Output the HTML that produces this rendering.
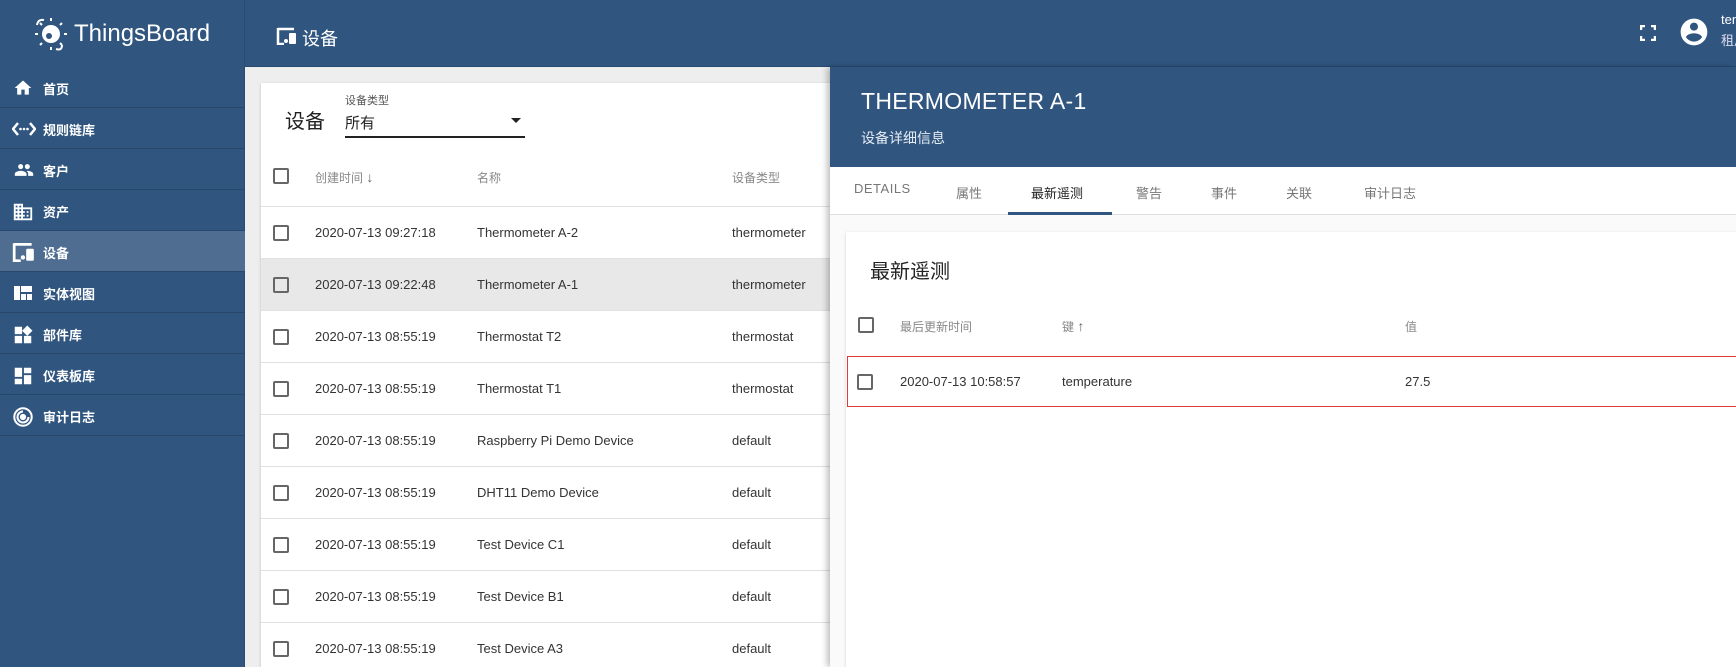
<!DOCTYPE html>
<html><head><meta charset="utf-8"><style>
*{box-sizing:border-box;margin:0;padding:0}
html{width:1736px;height:667px;overflow:hidden}
body{width:1736px;height:667px;overflow:hidden;background:#eeeeee;font-family:"Liberation Sans","Noto Sans CJK SC",sans-serif;position:relative}
.a{position:absolute;white-space:nowrap}
.top{left:0;top:0;width:1736px;height:67px;background:#305680;border-bottom:1px solid #274a70}
.side{left:0;top:0;width:245px;height:667px;background:#305680;border-right:1px solid #2a4b72}
.item{position:absolute;left:0;width:245px;height:41px;border-bottom:1px solid #28476b;color:#fff;font-size:13px;font-weight:bold}
.item span{position:absolute;left:43px;top:12px}
.item svg{position:absolute;left:12px;top:11px}
.sel{background:#4e6d91}
.cb{position:absolute;width:16px;height:16px;border:2px solid #666;border-radius:2px}
.row{position:absolute;left:261px;width:570px;height:52px;border-bottom:1px solid #e0e0e0;font-size:13px;color:#333;white-space:nowrap}
.row span{position:absolute;top:18px}
.th{font-size:12px;color:#888}
.tab{position:absolute;top:183px;font-size:13px;color:#777;white-space:nowrap}
</style></head><body>
<div class="a" style="left:0;top:0;width:1736px;height:2px;border-top:1px dashed #2b7bd8"></div>
<div class="a top"></div>
<div class="a side"></div>
<svg class="a" style="left:32px;top:15px" width="40" height="38" viewBox="0 0 40 38"><circle cx="19" cy="19" r="9" fill="#fff"/><g stroke="#fff" stroke-width="2" fill="none"><path d="M5 10 Q6 4 12 5"/><path d="M30 30 Q30 36 24 34"/><path d="M19 6v-3M19 32v3M6 19h-3M32 19h3M10 10l-2-2M28 28l2 2M28 10l2-2M10 28l-2 2"/></g><circle cx="17" cy="21" r="3" fill="#305680"/></svg>
<div class="a" style="left:74px;top:20px;color:#fff;font-size:24px">ThingsBoard</div>
<svg class="a" style="left:276px;top:27px" width="22" height="18" viewBox="0 0 22 18"><path d="M2 2h16" stroke="#fff" stroke-width="2.5"/><path d="M2 1v16h6" stroke="#fff" stroke-width="2.5" fill="none"/><rect x="13" y="6" width="7" height="11" rx="1" fill="#fff"/><circle cx="10" cy="14" r="2" fill="#fff"/></svg>
<div class="a" style="left:302px;top:25px;color:#fff;font-size:18px">设备</div>
<svg class="a" style="left:1640px;top:25px" width="16" height="16" viewBox="0 0 16 16" fill="none" stroke="#fff" stroke-width="2.5"><path d="M1 5V1h4M11 1h4v4M15 11v4h-4M5 15H1v-4"/></svg>
<svg class="a" style="left:1678px;top:16px" width="32" height="32" viewBox="0 0 24 24"><path fill="#fff" d="M12 2C6.48 2 2 6.48 2 12s4.48 10 10 10 10-4.48 10-10S17.52 2 12 2zm0 3c1.66 0 3 1.34 3 3s-1.34 3-3 3-3-1.34-3-3 1.34-3 3-3zm0 14.2c-2.5 0-4.71-1.28-6-3.22.03-1.99 4-3.08 6-3.08 1.99 0 5.97 1.09 6 3.08-1.29 1.94-3.5 3.22-6 3.22z"/></svg>
<div class="a" style="left:1721px;top:12px;color:#fff;font-size:13px">tenant</div>
<div class="a" style="left:1721px;top:30px;color:#dde;font-size:13px">租户</div>
<div class="item" style="top:67px"><svg width="22" height="20" viewBox="0 0 24 24"><path fill="#fff" d="M10 20v-6h4v6h5v-8h3L12 3 2 12h3v8z"/></svg><span>首页</span></div>
<div class="item" style="top:108px"><svg width="24" height="20" viewBox="0 0 24 20"><path d="M6 4L1 10l5 6M18 4l5 6-5 6" stroke="#fff" stroke-width="2.5" fill="none"/><circle cx="8.5" cy="10" r="1.3" fill="#fff"/><circle cx="12" cy="10" r="1.3" fill="#fff"/><circle cx="15.5" cy="10" r="1.3" fill="#fff"/></svg><span>规则链库</span></div>
<div class="item" style="top:149px"><svg width="24" height="20" viewBox="0 0 24 24"><path fill="#fff" d="M16 11c1.66 0 2.99-1.34 2.99-3S17.66 5 16 5c-1.66 0-3 1.34-3 3s1.34 3 3 3zm-8 0c1.66 0 2.99-1.34 2.99-3S9.66 5 8 5C6.34 5 5 6.34 5 8s1.34 3 3 3zm0 2c-2.33 0-7 1.17-7 3.5V19h14v-2.5c0-2.33-4.67-3.5-7-3.5zm8 0c-.29 0-.62.02-.97.05 1.16.84 1.97 1.970 1.97 3.45V19h6v-2.5c0-2.33-4.67-3.5-7-3.5z"/></svg><span>客户</span></div>
<div class="item" style="top:190px"><svg width="22" height="22" viewBox="0 0 24 24"><path fill="#fff" d="M12 7V3H2v18h20V7H12zM6 19H4v-2h2v2zm0-4H4v-2h2v2zm0-4H4V9h2v2zm0-4H4V5h2v2zm4 12H8v-2h2v2zm0-4H8v-2h2v2zm0-4H8V9h2v2zm0-4H8V5h2v2zm10 12h-8v-2h2v-2h-2v-2h2v-2h-2V9h8v10zm-2-8h-2v2h2v-2zm0 4h-2v2h2v-2z"/></svg><span>资产</span></div>
<div class="item sel" style="top:231px"><svg width="24" height="20" viewBox="0 0 22 18"><path d="M2 2h16" stroke="#fff" stroke-width="2.5"/><path d="M2 1v16h6" stroke="#fff" stroke-width="2.5" fill="none"/><rect x="13" y="6" width="7" height="11" rx="1" fill="#fff"/><circle cx="10" cy="14" r="2" fill="#fff"/></svg><span>设备</span></div>
<div class="item" style="top:272px"><svg width="22" height="20" viewBox="0 0 22 20"><rect x="2" y="3" width="6" height="14" fill="#fff"/><rect x="9" y="3" width="11" height="6" fill="#fff"/><rect x="9" y="11" width="5" height="6" fill="#fff"/><rect x="15" y="11" width="5" height="6" fill="#fff"/></svg><span>实体视图</span></div>
<div class="item" style="top:313px"><svg width="22" height="22" viewBox="0 0 24 24"><path fill="#fff" d="M13 13v8h8v-8h-8zM3 21h8v-8H3v8zM3 3v8h8V3H3zm13.66-1.31L11 7.34 16.66 13l5.66-5.66-5.66-5.65z"/></svg><span>部件库</span></div>
<div class="item" style="top:354px"><svg width="22" height="22" viewBox="0 0 24 24"><path fill="#fff" d="M3 13h8V3H3v10zm0 8h8v-6H3v6zm10 0h8V11h-8v10zm0-18v6h8V3h-8z"/></svg><span>仪表板库</span></div>
<div class="item" style="top:395px"><svg width="22" height="22" viewBox="0 0 24 24" fill="none" stroke="#fff" stroke-width="2.2"><circle cx="12" cy="12" r="9.5"/><path d="M12 6a6 6 0 1 0 6 6"/><circle cx="12" cy="12" r="2.3" fill="#fff"/></svg><span>审计日志</span></div>
<div class="a" style="left:261px;top:83px;width:600px;height:584px;background:#fff;box-shadow:0 1px 3px rgba(0,0,0,.2)"></div>
<div class="a" style="left:285px;top:105px;font-size:20px;color:#222">设备</div>
<div class="a" style="left:345px;top:92px;font-size:11px;color:#555">设备类型</div>
<div class="a" style="left:345px;top:112px;font-size:15px;color:#222">所有</div>
<div class="a" style="left:345px;top:136px;width:180px;height:1.5px;background:#222"></div>
<div class="a" style="left:511px;top:118px;width:0;height:0;border-left:5px solid transparent;border-right:5px solid transparent;border-top:5px solid #222"></div>
<div class="row" style="top:154px;height:53px"><div class="cb" style="left:12px;top:14px"></div><span class="th" style="left:54px;top:15px">创建时间 <b style="font-size:14px;color:#666">↓</b></span><span class="th" style="left:216px;top:15px">名称</span><span class="th" style="left:471px;top:15px">设备类型</span></div>
<div class="row" style="top:207px"><div class="cb" style="left:12px;top:18px"></div><span style="left:54px">2020-07-13 09:27:18</span><span style="left:216px">Thermometer A-2</span><span style="left:471px">thermometer</span></div>
<div class="row" style="top:259px;background:#e8e8e8"><div class="cb" style="left:12px;top:18px"></div><span style="left:54px">2020-07-13 09:22:48</span><span style="left:216px">Thermometer A-1</span><span style="left:471px">thermometer</span></div>
<div class="row" style="top:311px"><div class="cb" style="left:12px;top:18px"></div><span style="left:54px">2020-07-13 08:55:19</span><span style="left:216px">Thermostat T2</span><span style="left:471px">thermostat</span></div>
<div class="row" style="top:363px"><div class="cb" style="left:12px;top:18px"></div><span style="left:54px">2020-07-13 08:55:19</span><span style="left:216px">Thermostat T1</span><span style="left:471px">thermostat</span></div>
<div class="row" style="top:415px"><div class="cb" style="left:12px;top:18px"></div><span style="left:54px">2020-07-13 08:55:19</span><span style="left:216px">Raspberry Pi Demo Device</span><span style="left:471px">default</span></div>
<div class="row" style="top:467px"><div class="cb" style="left:12px;top:18px"></div><span style="left:54px">2020-07-13 08:55:19</span><span style="left:216px">DHT11 Demo Device</span><span style="left:471px">default</span></div>
<div class="row" style="top:519px"><div class="cb" style="left:12px;top:18px"></div><span style="left:54px">2020-07-13 08:55:19</span><span style="left:216px">Test Device C1</span><span style="left:471px">default</span></div>
<div class="row" style="top:571px"><div class="cb" style="left:12px;top:18px"></div><span style="left:54px">2020-07-13 08:55:19</span><span style="left:216px">Test Device B1</span><span style="left:471px">default</span></div>
<div class="row" style="top:623px;border-bottom:none;height:44px"><div class="cb" style="left:12px;top:18px"></div><span style="left:54px">2020-07-13 08:55:19</span><span style="left:216px">Test Device A3</span><span style="left:471px">default</span></div>
<div class="a" style="left:830px;top:67px;width:906px;height:600px;background:#fafafa;box-shadow:-3px 0 6px rgba(0,0,0,.25)"></div>
<div class="a" style="left:830px;top:67px;width:906px;height:100px;background:#305680"></div>
<div class="a" style="left:861px;top:88px;color:#fff;font-size:23px;letter-spacing:0.3px">THERMOMETER A-1</div>
<div class="a" style="left:861px;top:128px;color:#e6ecf3;font-size:14px">设备详细信息</div>
<div class="a" style="left:830px;top:167px;width:906px;height:48px;background:#fff;border-bottom:1px solid #ddd"></div>
<div class="tab" style="left:854px;top:181px;letter-spacing:.5px">DETAILS</div>
<div class="tab" style="left:956px">属性</div>
<div class="tab" style="left:1031px;color:#222">最新遥测</div>
<div class="tab" style="left:1136px">警告</div>
<div class="tab" style="left:1211px">事件</div>
<div class="tab" style="left:1286px">关联</div>
<div class="tab" style="left:1364px">审计日志</div>
<div class="a" style="left:1008px;top:212px;width:104px;height:3px;background:#305680"></div>
<div class="a" style="left:846px;top:232px;width:900px;height:440px;background:#fff;box-shadow:0 1px 3px rgba(0,0,0,.15)"></div>
<div class="a" style="left:870px;top:255px;font-size:20px;color:#222">最新遥测</div>
<div class="cb" style="left:858px;top:317px"></div>
<div class="a th" style="left:900px;top:318px">最后更新时间</div>
<div class="a th" style="left:1062px;top:318px">键 <b style="font-size:14px;color:#666">↑</b></div>
<div class="a th" style="left:1405px;top:318px">值</div>
<div class="a" style="left:847px;top:356px;width:900px;height:51px;border:1px solid #e53935"></div>
<div class="cb" style="left:857px;top:374px"></div>
<div class="a" style="left:900px;top:374px;font-size:13px;color:#333">2020-07-13 10:58:57</div>
<div class="a" style="left:1062px;top:374px;font-size:13px;color:#333">temperature</div>
<div class="a" style="left:1405px;top:374px;font-size:13px;color:#333">27.5</div>
</body></html>
